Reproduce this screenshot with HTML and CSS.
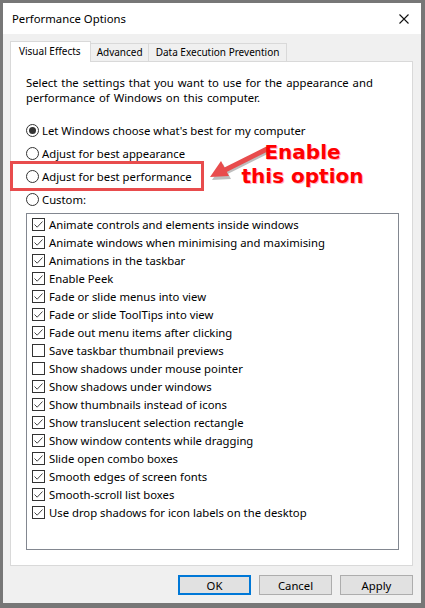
FILE: index.html
```html
<!DOCTYPE html>
<html lang="en">
<head>
    <meta charset="UTF-8">
    <title>Performance Options</title>
    <link rel="stylesheet" href="styles.css">
</head>
<body>
    <div class="window">
        <div class="titlebar">
            <span class="title">Performance Options</span>
            <svg class="close" width="10" height="10" viewBox="0 0 10 10">
                <path d="M0.5 0.5 L9.5 9.5 M9.5 0.5 L0.5 9.5" stroke="#111" stroke-width="1.1" fill="none"/>
            </svg>
        </div>

        <div class="content">
            <div class="tabs">
                <div class="tab active">Visual Effects</div>
                <div class="tab">Advanced</div>
                <div class="tab wide">Data Execution Prevention</div>
            </div>

            <div class="panel">
                <p class="intro">Select the settings that you want to use for the appearance and performance of Windows on this computer.</p>

                <div class="radios">
                    <div class="radio-row"><span class="radio checked"></span>Let Windows choose what's best for my computer</div>
                    <div class="radio-row"><span class="radio"></span>Adjust for best appearance</div>
                    <div class="radio-row"><span class="radio"></span>Adjust for best performance</div>
                    <div class="radio-row"><span class="radio"></span>Custom:</div>
                </div>

                <div class="listbox" id="effects"></div>

                <!-- annotation drawn over the dialog -->
                <div class="highlight"></div>
                <svg class="arrow" width="70" height="50" viewBox="0 0 70 50">
                    <g transform="translate(1,2)" opacity="0.25">
                        <path d="M62 3 L20 24" stroke="#000" stroke-width="5" stroke-linecap="round"/>
                        <path d="M6 32 L17 16 L25 31 Z" fill="#000"/>
                    </g>
                    <path d="M62 3 L20 24" stroke="#e84c4d" stroke-width="5" stroke-linecap="round"/>
                    <path d="M5 31 L16 15 L24 30 Z" fill="#e84c4d"/>
                </svg>
                <div class="callout">Enable<br>this option</div>
            </div>

            <div class="buttons">
                <button class="btn default">OK</button>
                <button class="btn">Cancel</button>
                <button class="btn">Apply</button>
            </div>
        </div>
    </div>

    <script>
        var effects = [
            ['Animate controls and elements inside windows', true],
            ['Animate windows when minimising and maximising', true],
            ['Animations in the taskbar', true],
            ['Enable Peek', true],
            ['Fade or slide menus into view', true],
            ['Fade or slide ToolTips into view', true],
            ['Fade out menu items after clicking', true],
            ['Save taskbar thumbnail previews', false],
            ['Show shadows under mouse pointer', false],
            ['Show shadows under windows', true],
            ['Show thumbnails instead of icons', true],
            ['Show translucent selection rectangle', true],
            ['Show window contents while dragging', true],
            ['Slide open combo boxes', true],
            ['Smooth edges of screen fonts', true],
            ['Smooth-scroll list boxes', true],
            ['Use drop shadows for icon labels on the desktop', true]
        ];

        var check = '<svg width="13" height="13" viewBox="0 0 13 13"><path d="M2.5 6.5 L5.2 9.2 L10.5 3.5" stroke="#444" stroke-width="1" fill="none"/></svg>';

        var list = document.getElementById('effects');
        effects.forEach(function(item) {
            var row = document.createElement('div');
            row.className = 'check-row';
            row.innerHTML = '<span class="checkbox">' + (item[1] ? check : '') + '</span>' + item[0];
            list.appendChild(row);
        });
    </script>
</body>
</html>
```

FILE: styles.css
```css
body {
    margin: 0;
    background-color: #777;
    font-family: "Noto Sans", sans-serif;
    font-size: 11.3px;
    color: #000;
}

.window {
    margin: 3px 4px 5px 3px;
    height: 600px;
    background-color: #f0f0f0;
    display: flex;
    flex-direction: column;
}

.titlebar {
    height: 31px;
    background-color: #fff;
    display: flex;
    align-items: center;
    justify-content: space-between;
    padding: 0 12px 0 9px;
}

.title {
    font-size: 11.3px;
}

.close {
    margin-top: 1px;
}

.content {
    flex: 1;
    display: flex;
    flex-direction: column;
    padding: 7px 8px 8px 7px;
}

.tabs {
    display: flex;
    align-items: flex-end;
    height: 20px;
    font-size: 10px;
}

.tab {
    height: 18px;
    line-height: 17px;
    padding: 0 5px 0 6px;
    border: 1px solid #d9d9d9;
    border-bottom: none;
    border-left: none;
    box-sizing: border-box;
    background-color: #f0f0f0;
}

.tab.wide {
    padding: 0 7px 0 7px;
}

.tab.active {
    height: 21px;
    margin-bottom: -1px;
    position: relative;
    z-index: 1;
    border-left: 1px solid #d9d9d9;
    background-color: #fff;
    line-height: 19px;
    padding: 0 9px 0 8px;
}

.panel {
    position: relative;
    height: 505px;
    box-sizing: border-box;
    background-color: #fff;
    border: 1px solid #d9d9d9;
    padding: 13px 13px 0 15px;
}

.intro {
    margin: 0;
    line-height: 15px;
    width: 360px;
    word-spacing: 1px;
}

.radios {
    margin-top: 14px;
    margin-bottom: 2px;
}

.radio-row {
    height: 23px;
    display: flex;
    align-items: center;
}

.radio {
    width: 13px;
    height: 13px;
    box-sizing: border-box;
    border: 1px solid #333;
    border-radius: 50%;
    margin-right: 3px;
    position: relative;
}

.radio.checked::after {
    content: "";
    position: absolute;
    left: 2px;
    top: 2px;
    width: 7px;
    height: 7px;
    border-radius: 50%;
    background-color: #333;
}

.listbox {
    height: 337px;
    box-sizing: border-box;
    border: 1px solid #828790;
    padding: 1px 5px;
}

.check-row {
    height: 18px;
    display: flex;
    align-items: center;
}

.checkbox {
    width: 13px;
    height: 13px;
    box-sizing: border-box;
    border: 1px solid #333;
    margin-right: 4px;
    display: flex;
}

.checkbox svg {
    margin: -1px;
}

.buttons {
    display: flex;
    justify-content: flex-end;
    gap: 8px;
    margin-top: 9px;
}

.btn {
    width: 73px;
    height: 20px;
    padding: 0;
    font-family: "Noto Sans", sans-serif;
    font-size: 11.3px;
    background-color: #e1e1e1;
    border: 1px solid #adadad;
    color: #000;
}

.btn.default {
    border: 2px solid #0078d7;
}

.highlight {
    position: absolute;
    left: -1px;
    top: 99px;
    width: 194px;
    height: 30px;
    box-sizing: border-box;
    border: 3px solid #e84c4d;
}

.arrow {
    position: absolute;
    left: 194px;
    top: 84px;
}

.callout {
    position: absolute;
    left: 229px;
    top: 78px;
    width: 125px;
    text-align: center;
    font-family: "DejaVu Sans", sans-serif;
    font-weight: bold;
    font-size: 20px;
    line-height: 24px;
    color: #ff0000;
    text-shadow: 1px 1px 0 #ffb3c6;
}
```
